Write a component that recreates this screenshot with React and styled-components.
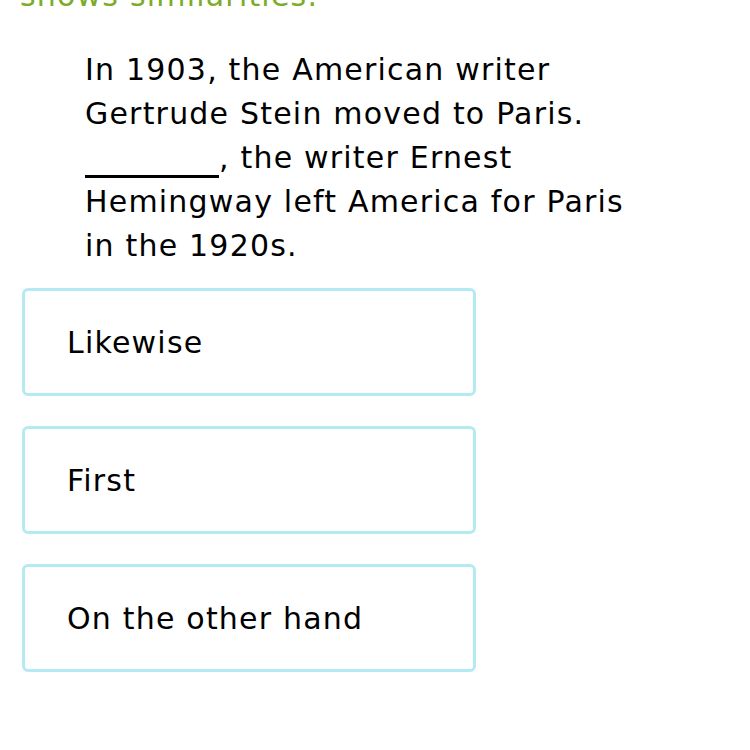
import styled, { createGlobalStyle } from 'styled-components';

const CHOICES = ['Likewise', 'First', 'On the other hand'];

const Global = createGlobalStyle`
  html, body {
    margin: 0;
    padding: 0;
    background: #ffffff;
  }
  body {
    font-family: "DejaVu Sans", Verdana, sans-serif;
    color: #000000;
  }
`;

const Page = styled.div`
  width: 750px;
  height: 750px;
  overflow: hidden;
  display: flex;
  flex-direction: column;
`;

const Prompt = styled.div`
  margin-top: -20px;
  padding-left: 20px;
  font-size: 30px;
  line-height: 32px;
  letter-spacing: 1.2px;
  color: #7aac2a;
`;

const Passage = styled.p`
  margin: 36px 0 0;
  padding-left: 85px;
  width: 560px;
  font-size: 30px;
  line-height: 44px;
  letter-spacing: 1.2px;
`;

const Blank = styled.span`
  display: inline-block;
  width: 134px;
  border-bottom: 3px solid #000000;
  vertical-align: -10px;
  letter-spacing: 0;
`;

const Choices = styled.div`
  margin-top: 20px;
  padding-left: 22px;
  display: flex;
  flex-direction: column;
  gap: 30px;
`;

const Choice = styled.div`
  box-sizing: border-box;
  width: 454px;
  height: 108px;
  border: 3px solid #b4ebf3;
  border-radius: 6px;
  display: flex;
  align-items: center;
  padding-left: 42px;
  font-size: 30px;
  letter-spacing: 1.2px;
`;

export default function App() {
  return (
    <Page>
      <Global />
      <Prompt>shows similarities.</Prompt>
      <Passage>
        In 1903, the American writer Gertrude Stein moved to Paris.{' '}
        <Blank />, the writer Ernest Hemingway left America for Paris in the 1920s.
      </Passage>
      <Choices>
        {CHOICES.map((c) => (
          <Choice key={c}>{c}</Choice>
        ))}
      </Choices>
    </Page>
  );
}
